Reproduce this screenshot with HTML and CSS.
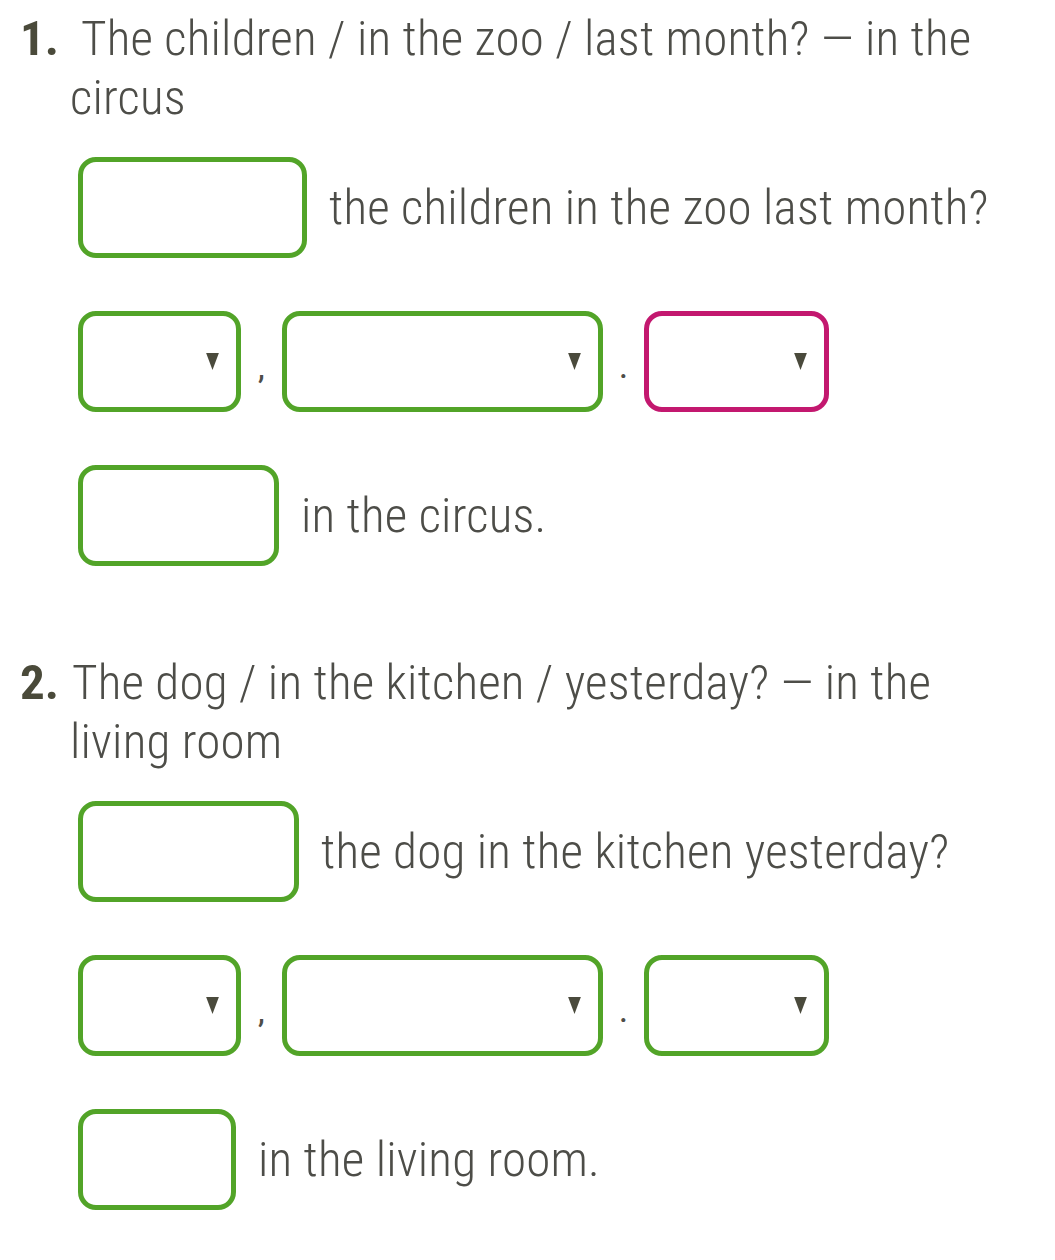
FILE: index.html
```html
<!DOCTYPE html>
<html lang="en">
<head>
<meta charset="utf-8">
<title>Exercise</title>
<link rel="stylesheet" href="styles.css">
</head>
<body>
<main class="page">
  <section class="task">
    <p class="prompt"><span class="num num-1">1.</span>The children / in the zoo / last month? — in the circus</p>
    <div class="rows">
      <div class="row">
        <span class="field w-228"></span>
        <span class="text">the children in the zoo last month?</span>
      </div>
      <div class="row">
        <span class="field select w-162"><svg class="caret" viewBox="0 0 12 16"><path d="M0 0H12L6 16Z"/></svg></span>
        <span class="punct">,</span>
        <span class="field select w-321"><svg class="caret" viewBox="0 0 12 16"><path d="M0 0H12L6 16Z"/></svg></span>
        <span class="punct">.</span>
        <span class="field select w-185 error"><svg class="caret" viewBox="0 0 12 16"><path d="M0 0H12L6 16Z"/></svg></span>
      </div>
      <div class="row">
        <span class="field w-200"></span>
        <span class="text">in the circus.</span>
      </div>
    </div>
  </section>
  <section class="task">
    <p class="prompt"><span class="num num-2">2.</span>The dog / in the kitchen / yesterday? — in the living room</p>
    <div class="rows">
      <div class="row">
        <span class="field w-220"></span>
        <span class="text">the dog in the kitchen yesterday?</span>
      </div>
      <div class="row">
        <span class="field select w-162"><svg class="caret" viewBox="0 0 12 16"><path d="M0 0H12L6 16Z"/></svg></span>
        <span class="punct">,</span>
        <span class="field select w-321"><svg class="caret" viewBox="0 0 12 16"><path d="M0 0H12L6 16Z"/></svg></span>
        <span class="punct">.</span>
        <span class="field select w-185"><svg class="caret" viewBox="0 0 12 16"><path d="M0 0H12L6 16Z"/></svg></span>
      </div>
      <div class="row">
        <span class="field w-157"></span>
        <span class="text">in the living room.</span>
      </div>
    </div>
  </section>
</main>
</body>
</html>
```

FILE: styles.css
```css
html, body {
  margin: 0;
  padding: 0;
  background: #ffffff;
}

body {
  font-family: "Roboto", "Liberation Sans", sans-serif;
  font-weight: 300;
  font-stretch: 81%;
  letter-spacing: 0.2px;
  color: #4d4d48;
  font-size: 49px;
  line-height: 59px;
}

.page {
  padding: 9px 0 0 0;
  display: flex;
  flex-direction: column;
  gap: 87px;
}

.prompt {
  margin: 0;
  padding-left: 70px;
  padding-right: 60px;
  text-indent: -50px;
}

.num {
  display: inline-block;
  text-indent: 0;
  font-weight: 700;
  letter-spacing: 0;
  color: #4a4a3a;
}

.num-1 {
  width: 61px;
}

.num-2 {
  width: 52px;
}

.rows {
  margin-top: 30px;
  padding-left: 78px;
  display: flex;
  flex-direction: column;
  gap: 53px;
}

.row {
  display: flex;
  align-items: center;
  height: 101px;
}

.field {
  box-sizing: border-box;
  height: 101px;
  border: 5px solid #52a428;
  border-radius: 18px;
  background: #fff;
  flex: none;
}

.field.error {
  border-color: #c3186f;
}

.select {
  display: flex;
  align-items: center;
  justify-content: flex-end;
  padding-right: 17px;
}

.caret {
  width: 13px;
  height: 17px;
  fill: #4a4a3c;
}

.w-228 { width: 229px; }
.w-162 { width: 163px; }
.w-321 { width: 321px; }
.w-185 { width: 185px; }
.w-200 { width: 201px; }
.w-220 { width: 221px; }
.w-157 { width: 158px; }

.text {
  margin-left: 22px;
  white-space: nowrap;
}

.punct {
  align-self: flex-start;
  margin-top: 42px;
  width: 41px;
  text-align: center;
  font-size: 30px;
  line-height: 30px;
  font-weight: 500;
}
```
